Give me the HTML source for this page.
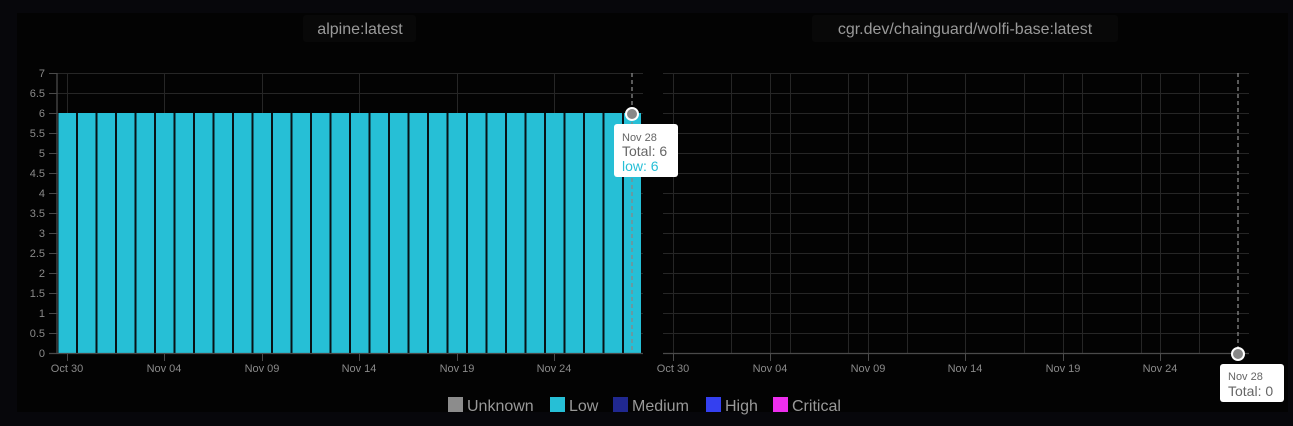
<!DOCTYPE html>
<html><head><meta charset="utf-8"><style>
html,body{margin:0;padding:0;background:#07070b;width:1293px;height:426px;overflow:hidden}
svg{display:block}
text{font-family:"Liberation Sans",sans-serif}
</style></head><body>
<svg width="1293" height="426" viewBox="0 0 1293 426" xmlns="http://www.w3.org/2000/svg">
<defs>
<pattern id="bars" patternUnits="userSpaceOnUse" x="57.5" y="0" width="19.5" height="10">
<rect x="0" y="0" width="19.5" height="10" fill="#26bfd6"/>
<rect x="-1" y="0" width="2" height="10" fill="#081216"/>
<rect x="18.5" y="0" width="1" height="10" fill="#081216"/>
</pattern>
<pattern id="hgrid" patternUnits="userSpaceOnUse" x="0" y="73" width="10" height="20">
<rect x="0" y="0" width="10" height="1" fill="#262626"/>
</pattern>
</defs>
<rect x="17" y="13" width="1271" height="399" fill="#030303"/>
<rect x="303" y="15" width="113" height="27" rx="3" fill="#080808"/>
<text x="360" y="34" text-anchor="middle" font-size="16" fill="#9a9a9a">alpine:latest</text>
<rect x="812" y="15" width="306" height="27" rx="3" fill="#080808"/>
<text x="965" y="34" text-anchor="middle" font-size="16" fill="#9a9a9a">cgr.dev/chainguard/wolfi-base:latest</text>

<rect x="57" y="73" width="586" height="281" fill="url(#hgrid)"/>
<g stroke="#262626" stroke-width="1">
<line x1="67.5" y1="73" x2="67.5" y2="353"/><line x1="164.5" y1="73" x2="164.5" y2="353"/>
<line x1="262.5" y1="73" x2="262.5" y2="353"/><line x1="359.5" y1="73" x2="359.5" y2="353"/>
<line x1="457.5" y1="73" x2="457.5" y2="353"/><line x1="554.5" y1="73" x2="554.5" y2="353"/>
</g>
<rect x="58" y="113" width="583" height="240" fill="url(#bars)"/>
<line x1="632" y1="73" x2="632" y2="353" stroke="#888" stroke-width="1.3" stroke-dasharray="4,3"/>
<g stroke="#4a4a4a" stroke-width="1.3">
<line x1="57" y1="73" x2="57" y2="354"/><line x1="49" y1="353.5" x2="643" y2="353.5"/>
</g>
<g stroke="#4a4a4a" stroke-width="1">
<line x1="49" y1="73.5" x2="57" y2="73.5"/><line x1="49" y1="93.5" x2="57" y2="93.5"/><line x1="49" y1="113.5" x2="57" y2="113.5"/><line x1="49" y1="133.5" x2="57" y2="133.5"/><line x1="49" y1="153.5" x2="57" y2="153.5"/><line x1="49" y1="173.5" x2="57" y2="173.5"/><line x1="49" y1="193.5" x2="57" y2="193.5"/><line x1="49" y1="213.5" x2="57" y2="213.5"/><line x1="49" y1="233.5" x2="57" y2="233.5"/><line x1="49" y1="253.5" x2="57" y2="253.5"/><line x1="49" y1="273.5" x2="57" y2="273.5"/><line x1="49" y1="293.5" x2="57" y2="293.5"/><line x1="49" y1="313.5" x2="57" y2="313.5"/><line x1="49" y1="333.5" x2="57" y2="333.5"/>
<line x1="67.5" y1="353" x2="67.5" y2="361"/><line x1="164.5" y1="353" x2="164.5" y2="361"/><line x1="262.5" y1="353" x2="262.5" y2="361"/><line x1="359.5" y1="353" x2="359.5" y2="361"/><line x1="457.5" y1="353" x2="457.5" y2="361"/><line x1="554.5" y1="353" x2="554.5" y2="361"/>
</g>
<g font-size="11" fill="#8a8a8a" text-anchor="end">
<text x="45" y="77">7</text><text x="45" y="97">6.5</text><text x="45" y="117">6</text><text x="45" y="137">5.5</text><text x="45" y="157">5</text><text x="45" y="177">4.5</text><text x="45" y="197">4</text><text x="45" y="217">3.5</text><text x="45" y="237">3</text><text x="45" y="257">2.5</text><text x="45" y="277">2</text><text x="45" y="297">1.5</text><text x="45" y="317">1</text><text x="45" y="337">0.5</text><text x="45" y="357">0</text>
</g>
<g font-size="11" fill="#8a8a8a" text-anchor="middle">
<text x="67" y="372">Oct 30</text><text x="164" y="372">Nov 04</text><text x="262" y="372">Nov 09</text><text x="359" y="372">Nov 14</text><text x="457" y="372">Nov 19</text><text x="554" y="372">Nov 24</text>
<text x="673" y="372">Oct 30</text><text x="770" y="372">Nov 04</text><text x="868" y="372">Nov 09</text><text x="965" y="372">Nov 14</text><text x="1063" y="372">Nov 19</text><text x="1160" y="372">Nov 24</text>
</g>

<rect x="663" y="73" width="586" height="281" fill="url(#hgrid)"/>
<g stroke="#262626" stroke-width="1">
<line x1="673.5" y1="73" x2="673.5" y2="353"/><line x1="731.5" y1="73" x2="731.5" y2="353"/><line x1="770.5" y1="73" x2="770.5" y2="353"/><line x1="790.5" y1="73" x2="790.5" y2="353"/><line x1="848.5" y1="73" x2="848.5" y2="353"/><line x1="868.5" y1="73" x2="868.5" y2="353"/><line x1="907.5" y1="73" x2="907.5" y2="353"/><line x1="965.5" y1="73" x2="965.5" y2="353"/><line x1="1024.5" y1="73" x2="1024.5" y2="353"/><line x1="1063.5" y1="73" x2="1063.5" y2="353"/><line x1="1082.5" y1="73" x2="1082.5" y2="353"/><line x1="1141.5" y1="73" x2="1141.5" y2="353"/><line x1="1160.5" y1="73" x2="1160.5" y2="353"/><line x1="1199.5" y1="73" x2="1199.5" y2="353"/>
</g>
<line x1="1238" y1="73" x2="1238" y2="353" stroke="#888" stroke-width="1.3" stroke-dasharray="4,3"/>
<g stroke="#4a4a4a" stroke-width="1.3"><line x1="663" y1="353.5" x2="1249" y2="353.5"/></g>
<g stroke="#4a4a4a" stroke-width="1">
<line x1="673.5" y1="353" x2="673.5" y2="361"/><line x1="770.5" y1="353" x2="770.5" y2="361"/><line x1="868.5" y1="353" x2="868.5" y2="361"/><line x1="965.5" y1="353" x2="965.5" y2="361"/><line x1="1063.5" y1="353" x2="1063.5" y2="361"/><line x1="1160.5" y1="353" x2="1160.5" y2="361"/>
</g>

<g font-size="16" fill="#999">
<rect x="448" y="397" width="15" height="15" fill="#8c8c8c"/><text x="467" y="411">Unknown</text>
<rect x="550" y="397" width="15" height="15" fill="#26bfd6"/><text x="569" y="411">Low</text>
<rect x="613" y="397" width="15" height="15" fill="#202890"/><text x="632" y="411">Medium</text>
<rect x="706" y="397" width="15" height="15" fill="#3440f0"/><text x="725" y="411">High</text>
<rect x="773" y="397" width="15" height="15" fill="#ee2eee"/><text x="792" y="411">Critical</text>
</g>

<circle cx="632" cy="114" r="6" fill="#888" stroke="#fff" stroke-width="2"/>
<rect x="614" y="124" width="64" height="53" rx="3" fill="#fff"/>
<text x="622" y="141" font-size="11" fill="#666">Nov 28</text>
<text x="622" y="156" font-size="14" fill="#666">Total: 6</text>
<text x="622" y="171" font-size="14" fill="#26bfd6">low: 6</text>

<circle cx="1238" cy="354" r="6" fill="#888" stroke="#fff" stroke-width="2"/>
<rect x="1220" y="364" width="64" height="38" rx="3" fill="#fff"/>
<text x="1228" y="380" font-size="11" fill="#666">Nov 28</text>
<text x="1228" y="396" font-size="14" fill="#666">Total: 0</text>
</svg>
</body></html>
